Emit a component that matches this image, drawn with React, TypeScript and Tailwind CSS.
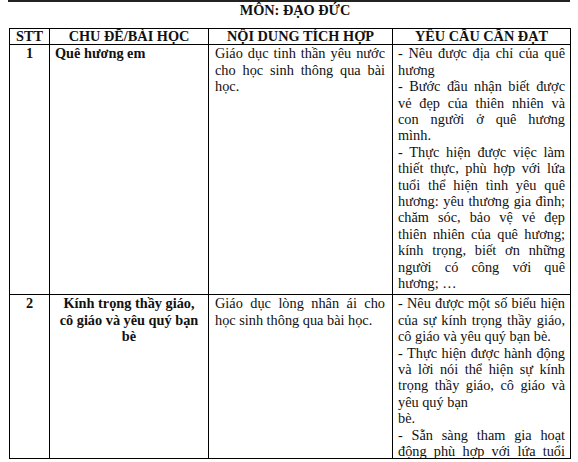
const serif = "font-['Liberation_Serif','Times_New_Roman',serif]";

type Line = { text: string; justify?: boolean };

// a paragraph as laid out in the source document: every line but the last is justified
function Para({ lines, open = false }: { lines: string[]; open?: boolean }) {
    const items: Line[] = lines.map((text, i) => ({
        text,
        justify: open || i < lines.length - 1,
    }));
    return (
        <div>
            {items.map((l, i) => (
                <div
                    key={i}
                    className={l.justify ? "text-justify [text-align-last:justify] whitespace-nowrap" : "whitespace-nowrap"}
                >
                    {l.text}
                </div>
            ))}
        </div>
    );
}

const cell = "border-l border-t border-black overflow-hidden";

export default function App() {
    return (
        <div className={`w-[578px] h-[462px] bg-white overflow-hidden text-[14.3px] leading-[16.4px] text-[#111] ${serif}`}>
            {/* rule above the title */}
            <div className="ml-[8px] w-[562px] h-[2px] bg-[#222]" />

            <h2 className="mt-[0px] text-center font-bold pl-[12px]">MÔN: ĐẠO ĐỨC</h2>

            <div className="ml-[9px] mt-[10px] w-[562px] grid grid-cols-[40px_159px_184px_178px] grid-rows-[16px_250px_164px] border-r border-b border-black">
                {/* header */}
                <div className={`${cell} text-center font-bold leading-[15px]`}>STT</div>
                <div className={`${cell} text-center font-bold leading-[15px]`}>CHU ĐỀ/BÀI HỌC</div>
                <div className={`${cell} text-center font-bold leading-[15px]`}>NỘI DUNG TÍCH HỢP</div>
                <div className={`${cell} text-center font-bold leading-[15px]`}>YÊU CẦU CẦN ĐẠT</div>

                {/* row 1 */}
                <div className={`${cell} text-center font-bold`}>1</div>
                <div className={`${cell} pl-[5px] font-bold`}>Quê hương em</div>
                <div className={`${cell} pl-[6px] pr-[7px]`}>
                    <Para lines={["Giáo dục tinh thần yêu nước", "cho học sinh thông qua bài", "học."]} />
                </div>
                <div className={`${cell} pl-[5px] pr-[5px]`}>
                    <Para lines={["- Nêu được địa chỉ của quê", "hương"]} />
                    <Para lines={["- Bước đầu nhận biết được", "vẻ đẹp của thiên nhiên và", "con người ở quê hương", "mình."]} />
                    <Para
                        lines={[
                            "- Thực hiện được việc làm",
                            "thiết thực, phù hợp với lứa",
                            "tuổi thể hiện tình yêu quê",
                            "hương: yêu thương gia đình;",
                            "chăm sóc, bảo vệ vẻ đẹp",
                            "thiên nhiên của quê hương;",
                            "kính trọng, biết ơn những",
                            "người có công với quê",
                            "hương; …",
                        ]}
                    />
                </div>

                {/* row 2 */}
                <div className={`${cell} text-center font-bold`}>2</div>
                <div className={`${cell} px-[6px] text-center font-bold`}>Kính trọng thầy giáo, cô giáo và yêu quý bạn bè</div>
                <div className={`${cell} pl-[6px] pr-[7px]`}>
                    <Para lines={["Giáo dục lòng nhân ái cho", "học sinh thông qua bài học."]} />
                </div>
                <div className={`${cell} pl-[5px] pr-[5px]`}>
                    <Para lines={["- Nêu được một số biểu hiện", "của sự kính trọng thầy giáo,", "cô giáo và yêu quý bạn bè."]} />
                    <Para lines={["- Thực hiện được hành động", "và lời nói thể hiện sự kính", "trọng thầy giáo, cô giáo và", "yêu quý bạn"]} />
                    <Para lines={["bè."]} />
                    <Para open lines={["- Sẵn sàng tham gia hoạt", "động phù hợp với lứa tuổi"]} />
                </div>
            </div>
        </div>
    );
}
